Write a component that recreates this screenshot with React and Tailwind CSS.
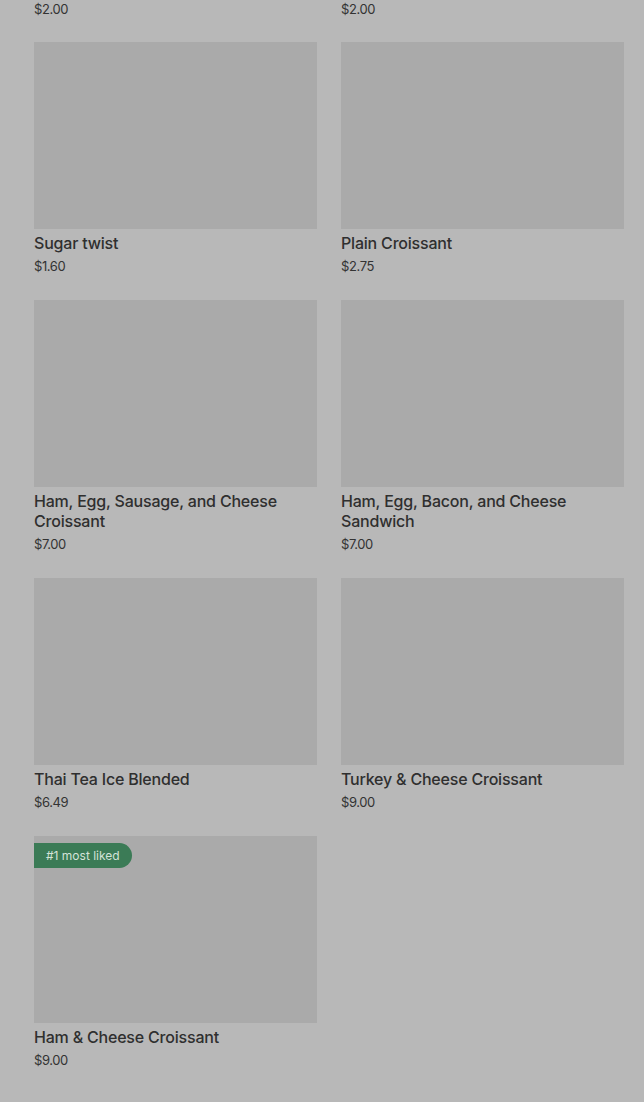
import React from 'react';

const items = [
  { name: 'Sugar twist', price: '$1.60' },
  { name: 'Plain Croissant', price: '$2.75' },
  { name: 'Ham, Egg, Sausage, and Cheese Croissant', price: '$7.00' },
  { name: 'Ham, Egg, Bacon, and Cheese Sandwich', price: '$7.00' },
  { name: 'Thai Tea Ice Blended', price: '$6.49' },
  { name: 'Turkey & Cheese Croissant', price: '$9.00' },
  { name: 'Ham & Cheese Croissant', price: '$9.00', badge: '#1 most liked' },
];

const MenuCard = ({ name, price, badge }) => {
  return (
    <div className="flex flex-col">
      <div className="relative h-[187px] bg-[#aaaaaa]">
        {badge && (
          <span className="absolute left-0 top-[7px] flex h-[25px] items-center rounded-r-full bg-[#3b7b56] pl-[12px] pr-[12px] text-[12px] text-[#d3e3d8]">
            {badge}
          </span>
        )}
      </div>
      <div className="mt-[4px] text-[16px] font-medium leading-[20px] tracking-[-0.2px] text-[#2f2f2f]">{name}</div>
      <div className="mt-[4px] text-[13px] leading-[18px] tracking-[-0.4px] text-[#333333]">{price}</div>
    </div>
  );
};

export default function App() {
  return (
    <div
      className="min-h-[1102px] overflow-hidden bg-[#b8b8b8] pl-[34px] pr-[20px]"
      style={{ fontFamily: 'Inter, "Noto Sans", sans-serif' }}
    >
      <div className="grid grid-cols-2 gap-x-[24px] text-[13px] leading-[18px] tracking-[-0.4px] text-[#333333]">
        <div>$2.00</div>
        <div>$2.00</div>
      </div>
      <div className="mt-[24px] grid grid-cols-2 gap-x-[24px] gap-y-[25px] pb-[40px]">
        {items.map((item) => (
          <MenuCard key={item.name} {...item} />
        ))}
      </div>
    </div>
  );
}
